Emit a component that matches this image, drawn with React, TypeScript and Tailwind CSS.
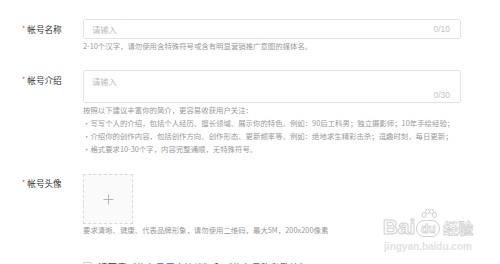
import React from "react";

const font = "font-['Noto_Sans_CJK_SC','Noto_Sans',sans-serif]";

function Label({ text, className = "" }: { text: string; className?: string }) {
  return (
    <div className={`w-[83px] shrink-0 pl-[22px] flex items-start ${className}`}>
      <span className="text-[#f04142] text-[7px] leading-[7px] mr-[2px] mt-[2px]">*</span>
      <span className="text-[8.6px] leading-[12px] text-[#333]">{text}</span>
    </div>
  );
}

export default function App() {
  return (
    <div className={`relative w-[500px] h-[264px] overflow-hidden bg-white ${font}`}>
      <div className="pt-[19px]">
        {/* Row 1 */}
        <div className="flex items-center">
          <Label text="帐号名称" />
          <div className="w-[378px] h-[20px] border border-[#e3e3e3] rounded-[2px] flex items-center justify-between pl-[8px] pr-[10px]">
            <span className="text-[8.3px] text-[#bdbdbd]">请输入</span>
            <span className="text-[8.5px] text-[#c4c4c4] font-['Liberation_Sans',sans-serif]">0/10</span>
          </div>
        </div>
        <div className="ml-[83px] mt-[2px] text-[7.4px] leading-[10px] text-[#999]">
          2-10个汉字，请勿使用含特殊符号或含有明显营销推广意图的媒体名。
        </div>

        {/* Row 2 */}
        <div className="flex mt-[19px]">
          <Label text="帐号介绍" className="mt-[4px]" />
          <div className="w-[378px] h-[33px] border border-[#e3e3e3] rounded-[2px] flex flex-col justify-between pl-[8px] pr-[10px] pt-[5px] pb-[2px]">
            <span className="text-[8.3px] leading-[10px] text-[#bdbdbd]">请输入</span>
            <span className="self-end text-[8.5px] leading-[10px] text-[#c4c4c4] font-['Liberation_Sans',sans-serif]">0/30</span>
          </div>
        </div>
        <div className="ml-[83px] text-[7.4px] leading-[13px] text-[#999]">
          <div>按照以下建议丰富你的简介，更容易收获用户关注：</div>
          <div>·写写个人的介绍，包括个人经历、擅长领域、展示你的特色。例如：90后工科男；独立摄影师；10年手绘经验；</div>
          <div>·介绍你的创作内容，包括创作方向、创作形态、更新频率等。例如：绝地求生精彩击杀；逗趣时刻，每日更新；</div>
          <div>·格式要求10-30个字，内容完整通顺，无特殊符号。</div>
        </div>

        {/* Row 3 */}
        <div className="flex mt-[19px]">
          <Label text="帐号头像" className="mt-[3px]" />
          <div className="w-[50px] h-[50px] border border-dashed border-[#d9d9d9] bg-[#fafafa] flex items-center justify-center">
            <svg width="11" height="11" viewBox="0 0 11 11">
              <path d="M5.5 0.5V10.5M0.5 5.5H10.5" stroke="#b5b5b5" strokeWidth="1" />
            </svg>
          </div>
        </div>
        <div className="ml-[83px] mt-[1px] text-[7.4px] leading-[10px] text-[#999]">
          要求清晰、健康、代表品牌形象，请勿使用二维码，最大5M，200x200像素
        </div>

        {/* Row 4 */}
        <div className="flex items-start ml-[83px] mt-[26px]">
          <div className="w-[9px] h-[9px] border border-[#d0d0d0] rounded-[1px] mt-[1px]" />
          <div className="ml-[6px] text-[9.6px] leading-[12px] text-[#333]">
            请同意<span className="text-[#406eb5]">《头条号用户协议》</span>和<span className="text-[#406eb5]">《头条号隐私政策》</span>
          </div>
        </div>
      </div>

      {/* Baidu watermark */}
      <div className="absolute left-[382px] top-[209px] w-[92px] flex flex-col items-center pointer-events-none">
        <div className="flex items-end h-[28px]">
          <span className="text-[21px] leading-[20px] font-bold text-white [-webkit-text-stroke:1px_#d2d2d2] font-['Liberation_Sans',sans-serif]">Bai</span>
          <div className="relative w-[24px] h-[28px] ml-[1px]">
            <svg className="absolute left-[5px] top-0" width="16" height="12" viewBox="0 0 16 12">
              <ellipse cx="3" cy="6" rx="2" ry="2.5" fill="white" stroke="#d2d2d2" />
              <ellipse cx="6.5" cy="2.5" rx="2" ry="2.3" fill="white" stroke="#d2d2d2" />
              <ellipse cx="10.5" cy="2.5" rx="2" ry="2.3" fill="white" stroke="#d2d2d2" />
              <ellipse cx="13.5" cy="6" rx="2" ry="2.5" fill="white" stroke="#d2d2d2" />
            </svg>
            <div className="absolute left-0 bottom-0 w-[24px] h-[17px] rounded-[8px] border border-[#d2d2d2] bg-white flex items-center justify-center">
              <span className="text-[12px] leading-[12px] font-bold text-white [-webkit-text-stroke:0.8px_#d2d2d2] font-['Liberation_Sans',sans-serif]">du</span>
            </div>
          </div>
          <span className="ml-[3px] text-[15px] leading-[18px] font-bold text-white [-webkit-text-stroke:0.8px_#d2d2d2]">经验</span>
        </div>
        <div className="mt-[4px] text-[10px] leading-[11px] font-bold text-[#e2e2e2] font-['Liberation_Sans',sans-serif]">
          jingyan.baidu.com
        </div>
      </div>
    </div>
  );
}
